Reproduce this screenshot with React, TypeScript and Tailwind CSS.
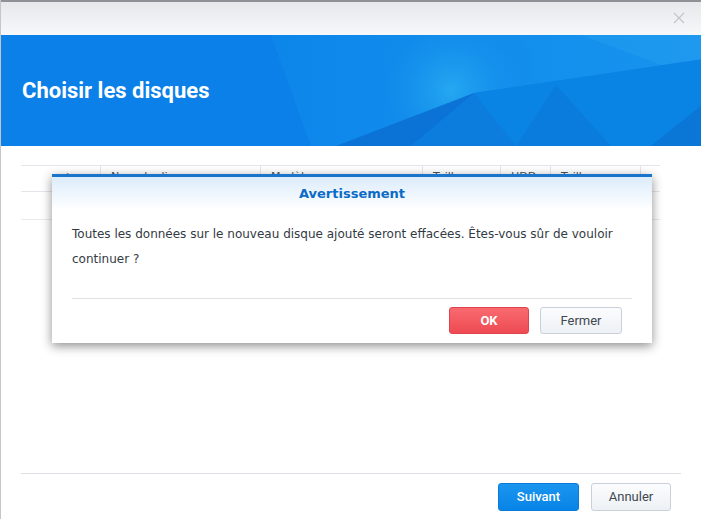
import React from 'react';

const font = { fontFamily: '"DejaVu Sans", Verdana, sans-serif' };
const ui = { fontFamily: 'Roboto, "Liberation Sans", sans-serif' };

const Banner: React.FC = () => (
  <div className="relative h-[111px] bg-[#0a80e8] overflow-hidden">
    <svg className="absolute inset-0" width="701" height="111" viewBox="0 0 701 111">
      <defs>
        <radialGradient id="glow" cx="450" cy="55" r="90" gradientUnits="userSpaceOnUse">
          <stop offset="0" stopColor="#2cb2f3" stopOpacity="0.75" />
          <stop offset="1" stopColor="#0a80e8" stopOpacity="0" />
        </radialGradient>
        <linearGradient id="band" x1="0" y1="0" x2="1" y2="0">
          <stop offset="0" stopColor="#0d86ea" />
          <stop offset="1" stopColor="#1794ee" />
        </linearGradient>
      </defs>
      <polygon points="270,0 701,0 701,25 473,58 370,111 310,111" fill="url(#band)" />
      <polygon points="360,0 701,0 701,22 473,58 400,95" fill="url(#glow)" />
      <polygon points="580,0 701,0 701,45" fill="#2aa2f0" opacity="0.35" />
      <polygon points="335,111 473,58 410,111" fill="#0b72d6" />
      <polygon points="473,58 515,111 410,111" fill="#0c7cdd" />
      <polygon points="473,58 701,24 701,111 515,111" fill="#0a84e4" />
      <polygon points="515,111 555,50 610,111" fill="#0a76d8" opacity="0.6" />
      <polygon points="650,111 701,70 701,111" fill="#0a70d0" opacity="0.7" />
    </svg>
    <h1
      className="relative pl-[21px] pt-[43px] text-[22px] font-bold leading-[26px] text-white"
      style={ui}
    >
      Choisir les disques
    </h1>
  </div>
);

const cols = [
  { w: 'w-[30px]', label: '' },
  { w: 'w-[50px]', label: '✓' },
  { w: 'w-[160px]', label: 'Nom du disque' },
  { w: 'w-[162px]', label: 'Modèle' },
  { w: 'w-[78px]', label: 'Taille' },
  { w: 'w-[50px]', label: 'HDD' },
  { w: 'w-[90px]', label: 'Taille' },
  { w: 'flex-1', label: '' },
];

const Table: React.FC = () => (
  <div className="px-[20px] pt-[19px] mr-[21px]" style={font}>
    <div className="flex h-[27px] border-y border-[#e3e6ea] text-[11px] leading-[13px] text-[#4a5360]">
      {cols.map((c, i) => (
        <div
          key={i}
          className={`${c.w} shrink-0 whitespace-nowrap px-[10px] pt-[4px] ${i > 0 && i < 7 ? 'border-r border-[#e3e6ea]' : ''}`}
        >
          {c.label}
        </div>
      ))}
    </div>
    <div className="h-[28px] border-b border-[#e8eaed]" />
  </div>
);

const Warning: React.FC = () => (
  <div className="absolute left-[51px] top-[174px] w-[600px] h-[169px] bg-white border-t-[3px] border-[#1b74cc] shadow-[0_3px_10px_rgba(0,0,0,0.45)]">
    <div className="h-[33px] bg-gradient-to-b from-[#dcecfb] to-white text-center">
      <span className="inline-block pt-[7px] text-[13px] font-bold text-[#0c6bc6]" style={font}>
        Avertissement
      </span>
    </div>
    <div className="px-[20px] pt-[12px] text-[12px] leading-[25px] text-[#333a43]" style={font}>
      Toutes les données sur le nouveau disque ajouté seront effacées. Êtes-vous sûr de vouloir
      <br />
      continuer ?
    </div>
    <div className="mx-[20px] mt-[26px] border-t border-[#dfe1e4]" />
    <div className="flex justify-end gap-[11px] pr-[30px] pt-[8px]" style={ui}>
      <button className="w-[80px] h-[27px] rounded-[3px] bg-gradient-to-b from-[#f86a70] to-[#ee4a52] border border-[#e0434b] text-white text-[13px] font-bold">
        OK
      </button>
      <button className="w-[82px] h-[27px] rounded-[3px] bg-gradient-to-b from-[#fbfcfd] to-[#edf1f5] border border-[#c9d0d8] text-[#404851] text-[13px]">
        Fermer
      </button>
    </div>
  </div>
);

const App: React.FC = () => {
  return (
    <div className="relative w-[701px] h-[519px] overflow-hidden bg-white border-l border-[#c4c6ca]">
      <div className="h-[35px] border-t-[2px] border-[#8e9196] bg-gradient-to-b from-[#e6e8eb] to-[#f7f8fa] flex justify-end pr-[16px] items-center">
        <svg width="12" height="12" viewBox="0 0 12 12" className="mt-[-1px]">
          <path d="M1 1 L11 11 M11 1 L1 11" stroke="#c3c7cc" strokeWidth="1.3" />
        </svg>
      </div>
      <Banner />
      <Table />
      <Warning />
      <div className="absolute left-[20px] right-[20px] top-[473px] border-t border-[#dcdfe3]" />
      <div className="absolute right-[30px] top-[483px] flex gap-[12px]" style={ui}>
        <button className="w-[81px] h-[28px] rounded-[3px] bg-gradient-to-b from-[#1a95ef] to-[#0784e6] border border-[#0a7bd8] text-white text-[13px] font-medium">
          Suivant
        </button>
        <button className="w-[80px] h-[28px] rounded-[3px] bg-gradient-to-b from-[#fbfcfd] to-[#edf1f5] border border-[#c9d0d8] text-[#404851] text-[13px]">
          Annuler
        </button>
      </div>
    </div>
  );
};

export default App;
